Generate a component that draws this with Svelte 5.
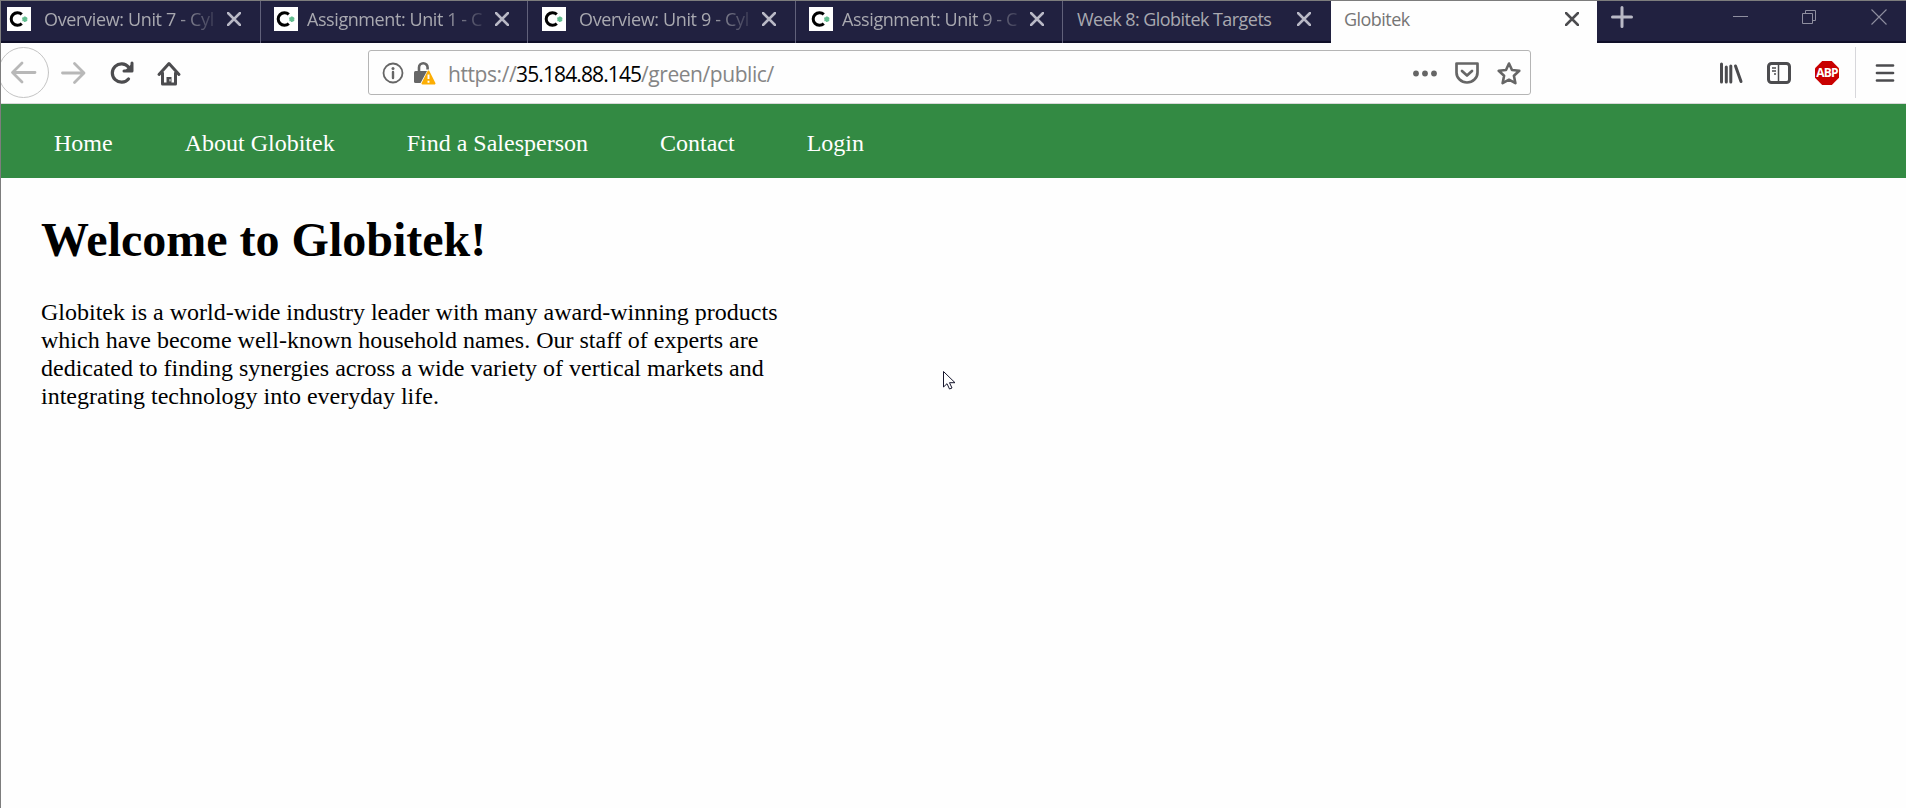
<script>
  const tabs = [
    { title: 'Overview: Unit 7 - Cyl', icon: true, w: 260, pad: 6, gap: 13, text: 172, cls: 'o' },
    { title: 'Assignment: Unit 1 - C', icon: true, w: 267, pad: 13, gap: 9, text: 179, cls: 'a' },
    { title: 'Overview: Unit 9 - Cyl', icon: true, w: 268, pad: 14, gap: 13, text: 172, cls: 'o' },
    { title: 'Assignment: Unit 9 - C', icon: true, w: 267, pad: 13, gap: 9, text: 179, cls: 'a' },
    { title: 'Week 8: Globitek Targets', icon: false, w: 268, pad: 14, gap: 0, text: 210, cls: 'w' },
    { title: 'Globitek', icon: false, w: 266, pad: 13, gap: 0, text: 200, cls: 'active' }
  ];
  const links = ['Home', 'About Globitek', 'Find a Salesperson', 'Contact', 'Login'];
</script>

<div class="window">
  <div class="tabs">
    {#each tabs as t}
      <div class="tab {t.cls}" style="width:{t.w}px;padding-left:{t.pad}px">
        {#if t.icon}
          <svg class="fav" width="24" height="24" viewBox="0 0 24 24">
            <rect width="24" height="24" fill="#fff" />
            <path d="M14.800 7.400A6.300 6.300 0 1 0 14.800 16.600" fill="none" stroke="#000" stroke-width="3" />
            <path d="M17.800 9.400v5.600M15.400 10.800l4.800 2.800M20.200 10.800l-4.800 2.800" stroke="#62bd8f" stroke-width="1.900" />
          </svg>
        {/if}
        <span class="title" class:fade={t.icon} style="margin-left:{t.gap}px;width:{t.text}px">{t.title}</span>
        <svg class="x" width="14" height="14" viewBox="0 0 14 14"><path d="M1 1l12 12M13 1L1 13" fill="none" stroke="currentColor" stroke-width="2.5" stroke-linecap="round" /></svg>
      </div>
    {/each}
    <svg class="plus" width="22" height="22" viewBox="0 0 22 22"><path d="M11 1.500v19M1.500 11h19" stroke="#b9b9c6" stroke-width="3" stroke-linecap="round" /></svg>
    <div class="controls">
      <svg width="16" height="16" viewBox="0 0 16 16"><path d="M0 7.500h15" stroke="#8f8fa0" /></svg>
      <svg width="16" height="16" viewBox="0 0 16 16" fill="none" stroke="#8f8fa0"><path d="M.5 4.500h10v10h-10zM3.500 4.500v-3h10v10h-3" /></svg>
      <svg width="16" height="16" viewBox="0 0 16 16"><path d="M.5.5l15 15M15.500.5l-15 15" stroke="#8f8fa0" stroke-width="1.1" /></svg>
    </div>
  </div>

  <div class="toolbar">
    <div class="left">
      <svg width="190" height="60" viewBox="0 0 190 60" fill="none" stroke-linecap="round" stroke-linejoin="round">
        <circle cx="22.500" cy="29.500" r="25" stroke="#c4c4c4" />
        <path d="M34 29.500H12M21 20l-9.500 9.500 9.500 9.500" stroke="#b8b8b8" stroke-width="2.800" />
        <path d="M61.500 30h21M73.500 20.500l9.500 9.500-9.500 9.500" stroke="#b8b8b8" stroke-width="2.800" />
        <path d="M127.500 36A9.200 9.200 0 1 1 127.500 24" stroke="#4c4c4f" stroke-width="3.200" />
        <path d="M131 20v8h-8" stroke="#4c4c4f" stroke-width="3" />
        <path d="M130.500 21v6h-6z" fill="#4c4c4f" />
        <path d="M158 31.500L168 20.500 178 31.500M161.500 30v11h13V30" stroke="#4c4c4f" stroke-width="3" />
        <path d="M165.500 34h5v7h-5z" fill="#4c4c4f" />
        <path d="M169 36.500v1.500" stroke="#fefefe" stroke-width="1" />
      </svg>
    </div>
    <div class="url">
      <svg class="info" width="22" height="22" viewBox="0 0 22 22"><circle cx="11" cy="11" r="9.500" fill="none" stroke="#666" stroke-width="1.800" /><path d="M11 10v6" stroke="#666" stroke-width="2.400" stroke-linecap="round" /><circle cx="11" cy="6.400" r="1.500" fill="#666" /></svg>
      <svg class="lock" width="22" height="24" viewBox="0 0 22 24"><path d="M5 11V6.500a4.300 4.300 0 0 1 8.600 0v2" fill="none" stroke="#666" stroke-width="2.600" /><rect y="10" width="14" height="12" rx="1.500" fill="#666" /><path d="M14.500 10.500L21 22.500H8z" fill="#ffb000" stroke="#fefefe" stroke-width="3" stroke-linejoin="round" /><path d="M14.500 10.500L20.500 22.500h-12z" fill="#fcae04" stroke="#fcae04" stroke-width="2" stroke-linejoin="round" /><path d="M14.500 13.500v4.500M14.500 19.800v2" stroke="#fff" stroke-width="1.900" /></svg>
      <div class="address"><span class="scheme">https://</span><span class="host">35.184.88.145</span><span class="path">/green/public/</span></div>
      <div class="actions">
        <svg width="24" height="26" viewBox="0 0 24 26" fill="#666"><circle cx="3" cy="13.500" r="2.900" /><circle cx="12" cy="13.500" r="2.900" /><circle cx="21" cy="13.500" r="2.900" /></svg>
        <svg width="24" height="26" viewBox="0 0 24 26" fill="none" stroke="#666" stroke-width="2.700" stroke-linecap="round" stroke-linejoin="round"><path d="M1.500 3.500h21v9a10.500 10 0 0 1-21 0z" /><path d="M7 11l5 4.500 5-4.500" /></svg>
        <svg width="24" height="26" viewBox="0 0 24 26" fill="none" stroke="#666" stroke-width="2.600" stroke-linejoin="round"><path d="M12 3.500l3 6.500 7.300.8-5.400 5 1.500 7.400L12 19.700l-6.400 3.500 1.500-7.400-5.400-5L9 10z" /></svg>
      </div>
    </div>
    <div class="right">
      <svg width="24" height="24" viewBox="0 0 24 24" stroke="#4c4c4f" stroke-width="3" stroke-linecap="round"><path d="M2.500 3v18M7.300 6v15M11.800 5v16M16.500 5l5.500 15.500" /></svg>
      <svg width="24" height="24" viewBox="0 0 24 24" fill="none" stroke="#4c4c4f"><rect x="1.500" y="2.500" width="21" height="19" rx="3" stroke-width="3" /><path d="M11.500 3v18" stroke-width="1.500" /><path d="M5 7h4M5 10h4M7 13h2" stroke-width="1.500" /></svg>
      <div class="abp"><span>ABP</span></div>
    </div>
    <div class="sep"></div>
    <svg class="menu" width="20" height="20" viewBox="0 0 20 20" stroke="#4c4c4f" stroke-width="2.700" stroke-linecap="round"><path d="M2 2.500h16M2 10h16M2 17.500h16" /></svg>
  </div>

  <nav>
    {#each links as l}<a href="#top">{l}</a>{/each}
  </nav>
  <main>
    <h1>Welcome to Globitek!</h1>
    <p>Globitek is a world-wide industry leader with many award-winning products which have become well-known household names. Our staff of experts are dedicated to finding synergies across a wide variety of vertical markets and integrating technology into everyday life.</p>
  </main>
  <svg class="cursor" width="13" height="19" viewBox="0 0 13 19"><path d="M.5.5v15.500l3.500-3.300 2.500 5.300 2.500-1-2.500-5.300h5.500z" fill="#fff" stroke="#15152c" stroke-width="1" /></svg>
</div>

<style>
  :global(body) { background: #fefefe; overflow: hidden; }
  .window { box-sizing: border-box; height: 808px; width: 1906px; border-top: 1px solid #7d7d7d; border-left: 1px solid #7d7d7d; background: #fefefe; position: relative; overflow: hidden; }
  .tabs { display: flex; height: 42px; box-sizing: border-box; background: #212140; box-shadow: inset 0 -2px #0f0f28; font: 18px "Open Sans", sans-serif; color: #a9a9b0; }
  .tab { box-sizing: border-box; display: flex; align-items: center; border-right: 1px solid #61617a; padding-right: 18px; height: 42px; padding-bottom: 6px; flex: none; }
  .tab.o { padding-right: 19px; }
  .tab .x { margin-left: auto; color: #b9b9c6; flex: none; }
  .tab.w { border-right: 0; padding-right: 20px; }
  .tab.active { background: #fefefe; border: 0; color: #757575; }
  .tab.active .x { color: #4c4c4f; }
  .fav { flex: none; }
  .title { white-space: nowrap; letter-spacing: -0.55px; line-height: 26px; padding-bottom: 1px; }
  .tab.o .title { letter-spacing: -0.35px; }
  .tab.a .title { letter-spacing: -0.42px; }
  .fade { mask-image: linear-gradient(to right, #000 75%, rgba(0, 0, 0, 0.15)); }
  .plus { margin: 5px 0 0 14px; }
  .controls { display: flex; gap: 53px; margin: 8px 19px 0 auto; }
  .toolbar { display: flex; height: 61px; box-sizing: border-box; border-bottom: 1px solid #d8d8d8; align-items: flex-start; }
  .left { width: 367px; height: 60px; flex: none; }
  .url { box-sizing: border-box; display: flex; align-items: center; width: 1163px; height: 45px; margin-top: 7px; border: 1px solid #b5b5b5; border-radius: 3px; padding: 0 9px 0 13px; }
  .info, .lock { margin-top: 1px; }
  .lock { margin-left: 10px; }
  .address { margin: 2px 0 0 12px; font: 21px "Open Sans", sans-serif; display: flex; color: #858585; line-height: 28px; white-space: nowrap; }
  .scheme { width: 68px; letter-spacing: -0.42px; }
  .host { width: 125px; color: #000; letter-spacing: -0.88px; }
  .path { letter-spacing: -0.43px; }
  .actions { display: flex; gap: 18px; margin-left: auto; }
  .right { display: flex; gap: 24px; margin: 18px 0 0 188px; }
  .abp { width: 24px; height: 24px; background: #c90000; clip-path: polygon(30% 0, 70% 0, 100% 30%, 100% 70%, 70% 100%, 30% 100%, 0 70%, 0 30%); color: #fff; font: bold 12px/24px "Open Sans", sans-serif; text-align: center; letter-spacing: -0.8px; }
  .sep { width: 1px; height: 51px; background: #d7d7db; margin: 4px 19px 0 16px; }
  .menu { margin-top: 20px; }
  nav { display: flex; gap: 72px; height: 74px; box-sizing: border-box; background: #338a43; padding: 25px 0 0 53px; }
  nav a { color: #fff; text-decoration: none; font: 24px/28px "Liberation Serif", serif; }
  main { padding: 34px 0 0 40px; width: 745px; font: 24px/28px "Liberation Serif", serif; color: #000; }
  h1 { margin: 0; font-size: 48px; line-height: 55px; }
  p { margin: 31px 0 0; }
  .cursor { position: absolute; left: 942px; top: 370px; }
</style>
